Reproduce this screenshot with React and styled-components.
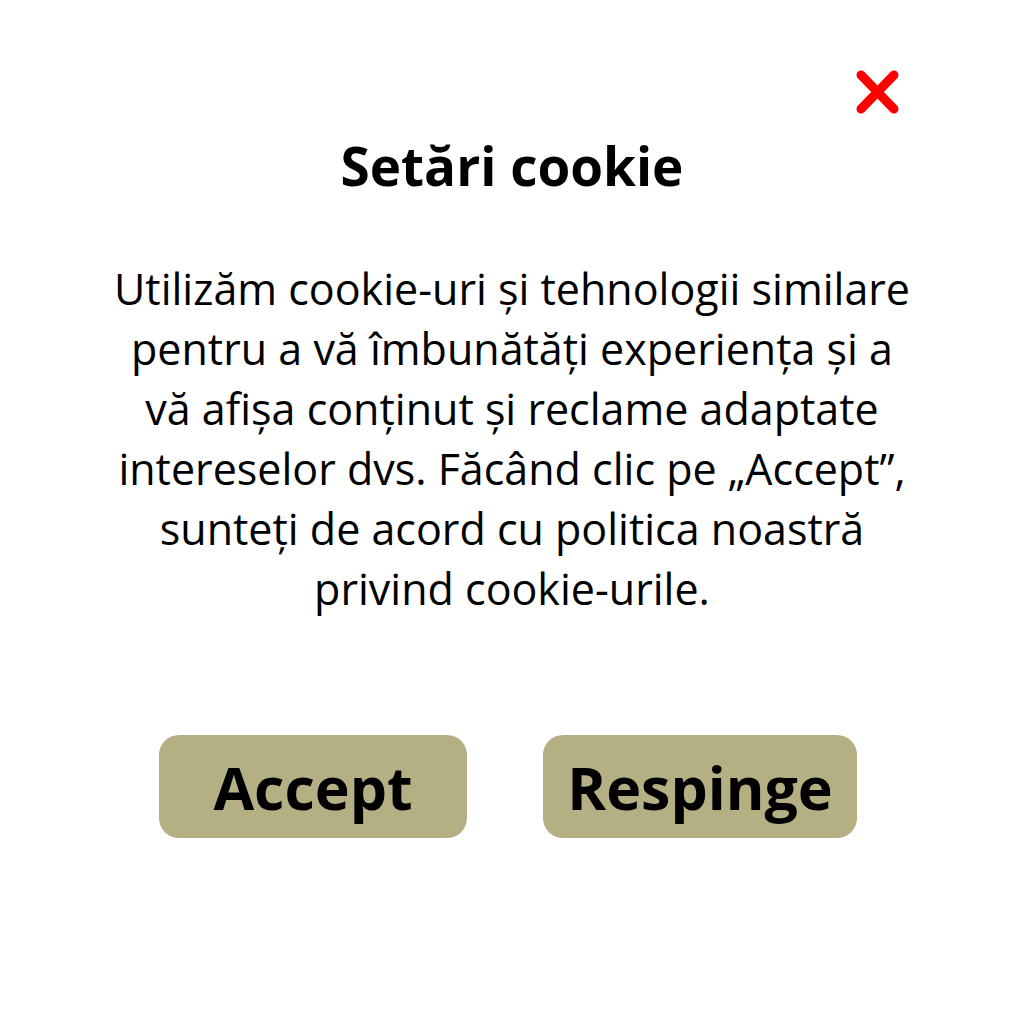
import React from 'react';
import styled, { createGlobalStyle } from 'styled-components';

const Global = createGlobalStyle`
html, body {
  margin: 0;
  padding: 0;
  background: #fff;
}
body {
  font-family: "Open Sans", "Noto Sans", sans-serif;
  color: #000;
}
`

const Page = styled.div`
width: 1024px;
height: 1024px;
position: relative;
display: flex;
flex-direction: column;
align-items: center;
box-sizing: border-box;
padding-top: 131px;
`
const Close = styled.button`
position: absolute;
top: 69px;
right: 124px;
width: 46px;
height: 46px;
padding: 0;
border: none;
background: none;
cursor: pointer;
`
const Title = styled.h1`
margin: 0;
font-size: 53px;
font-weight: 700;
line-height: 70px;
`
const Text = styled.p`
margin: 58px 0 0;
font-size: 43px;
line-height: 60px;
text-align: center;
font-weight: 400;
`
const Buttons = styled.div`
display: flex;
gap: 76px;
margin: 116px 8px 0 0;
`
const Button = styled.button`
width: ${p => p.w}px;
height: 103px;
border: none;
border-radius: 20px;
background: #b5b084;
font-family: "Open Sans", sans-serif;
font-weight: 700;
font-size: 59px;
color: #000;
display: flex;
align-items: center;
justify-content: center;
padding: 0;
cursor: pointer;
`

const lines = [
  'Utilizăm cookie-uri și tehnologii similare',
  'pentru a vă îmbunătăți experiența și a',
  'vă afișa conținut și reclame adaptate',
  'intereselor dvs. Făcând clic pe „Accept”,',
  'sunteți de acord cu politica noastră',
  'privind cookie-urile.',
];

export default function App() {
  return (
    <Page>
      <Global />
      <Close aria-label="close">
        <svg width="46" height="46" viewBox="0 0 46 46">
          <path d="M7 6 L40 40 M40 6 L7 40" stroke="#ff0000" strokeWidth="9" strokeLinecap="round" />
        </svg>
      </Close>
      <Title>Setări cookie</Title>
      <Text>
        {lines.map((l, i) => (
          <React.Fragment key={i}>{l}{i < lines.length - 1 && <br />}</React.Fragment>
        ))}
      </Text>
      <Buttons>
        <Button w={308}>Accept</Button>
        <Button w={314}>Respinge</Button>
      </Buttons>
    </Page>
  );
}
